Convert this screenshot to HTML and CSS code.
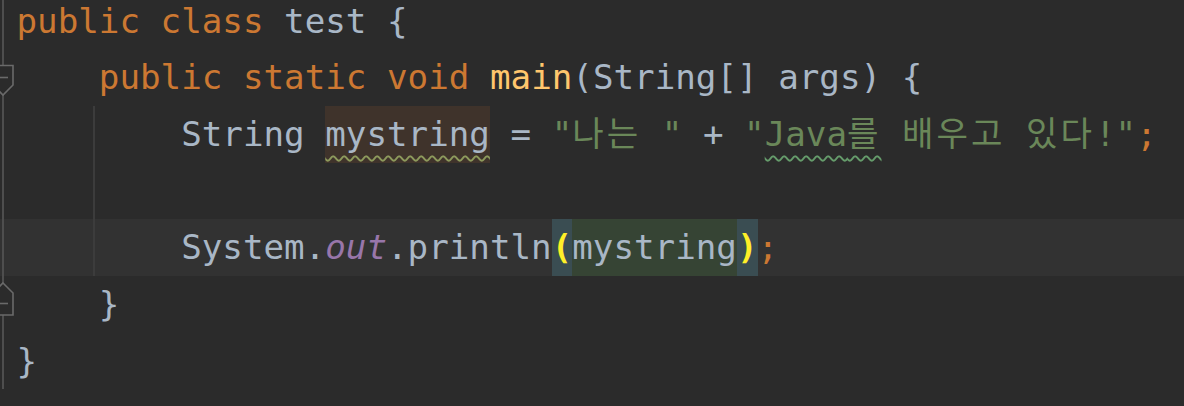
FILE: index.html
```html
<!DOCTYPE html>
<html lang="ko">
<head>
<meta charset="utf-8">
<title>test.java</title>
<link rel="stylesheet" href="styles.css">
</head>
<body>
<div class="editor">
  <div class="row">
    <div class="gutter"></div>
    <div class="code"><span class="kw">public</span> <span class="kw">class</span> test {</div>
  </div>
  <div class="row">
    <div class="gutter">
      <svg class="fold" viewBox="0 0 18 57" width="18" height="57"><path d="M-7 16.5 H13 V36 L3 46 L-7 36 Z" fill="#2b2b2b" stroke="#6a6a6a" stroke-width="1.6"/><path d="M-2 28.5 H8" stroke="#6a6a6a" stroke-width="1.6"/></svg>
    </div>
    <div class="code">    <span class="kw">public</span> <span class="kw">static</span> <span class="kw">void</span> <span class="fn">main</span>(String[] args) {</div>
  </div>
  <div class="row">
    <div class="gutter"></div>
    <div class="code"><span class="guide">    </span>    String <span class="write"><span class="weak">mystring</span></span> = <span class="str">"<span class="ko">나는</span> "</span> + <span class="str">"<span class="typo">Java<span class="ko">를</span></span> <span class="ko">배우고</span> <span class="ko">있다</span>!"</span><span class="kw">;</span></div>
  </div>
  <div class="row">
    <div class="gutter"></div>
    <div class="code"><span class="guide">    </span></div>
  </div>
  <div class="row current">
    <div class="gutter"></div>
    <div class="code"><span class="guide">    </span>    System.<span class="field">out</span>.println<span class="brace">(</span><span class="read">mystring</span><span class="brace">)</span><span class="kw">;</span></div>
  </div>
  <div class="row">
    <div class="gutter">
      <svg class="fold" viewBox="0 0 18 57" width="18" height="57"><path d="M3 7 L13 17 V39 H-7 V17 Z" fill="#2b2b2b" stroke="#6a6a6a" stroke-width="1.6"/><path d="M-2 27.5 H8" stroke="#6a6a6a" stroke-width="1.6"/></svg>
    </div>
    <div class="code">    }</div>
  </div>
  <div class="row">
    <div class="gutter"></div>
    <div class="code">}</div>
  </div>
</div>
</body>
</html>
```
FILE: styles.css
```css
html, body {
  margin: 0;
  padding: 0;
  background: #2b2b2b;
  height: 406px;
  overflow: hidden;
}

.editor {
  display: flex;
  flex-direction: column;
  margin-top: -7.2px;
  font-family: "DejaVu Sans Mono", "Noto Sans CJK KR", monospace;
  font-size: 34.2px;
  color: #a9b7c6;
}

.row {
  display: grid;
  grid-template-columns: 16.5px 1fr;
  height: 56.67px;
}

.row.current {
  background: #323232;
}

.gutter {
  height: 56.67px;
  background: linear-gradient(to right, transparent 2px, #4e4e4e 2px, #4e4e4e 4px, transparent 4px);
}

.fold {
  display: block;
  overflow: visible;
}

.code {
  white-space: pre;
  line-height: 56.67px;
  height: 56.67px;
}

.guide {
  display: inline-block;
  vertical-align: top;
  height: 56.67px;
  background: linear-gradient(to right, transparent 76px, #3c3c3c 76px, #3c3c3c 78px, transparent 78px);
}

.kw { color: #cc7832; }
.fn { color: #ffc66d; }
.str { color: #6a8759; }
.field { color: #9876aa; font-style: italic; }

.ko {
  letter-spacing: 3px;
}

.write {
  display: inline-block;
  vertical-align: top;
  height: 56.67px;
  background: #3f332b;
}

.read {
  display: inline-block;
  vertical-align: top;
  height: 56.67px;
  background: #364434;
}

.brace {
  display: inline-block;
  vertical-align: top;
  height: 56.67px;
  background: #3a4d52;
  color: #ffef28;
  font-weight: bold;
}

.weak {
  text-decoration: underline wavy #8d9a5c;
  text-decoration-thickness: 1.5px;
  text-underline-offset: 9px;
}

.typo {
  text-decoration: underline wavy #659c6b;
  text-decoration-thickness: 1.5px;
  text-underline-offset: 9px;
}
```
